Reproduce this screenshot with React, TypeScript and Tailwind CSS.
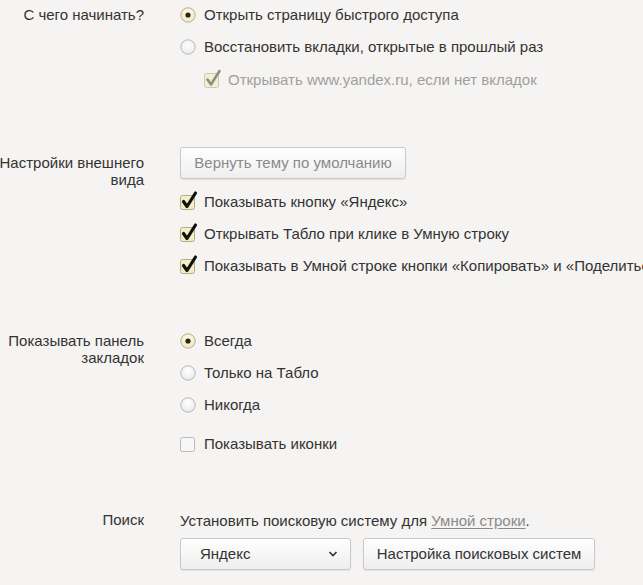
import { ReactNode } from 'react'

function Radio({ checked }: { checked?: boolean }) {
  return (
    <svg width="16" height="16" viewBox="0 0 16 16" className="shrink-0">
      <defs>
        <radialGradient id={checked ? 'rg-on' : 'rg-off'} cx="50%" cy="35%" r="65%">
          <stop offset="0%" stopColor={checked ? '#fffbe6' : '#ffffff'} />
          <stop offset="100%" stopColor={checked ? '#efe6c0' : '#e9e9e9'} />
        </radialGradient>
      </defs>
      <circle cx="8" cy="8" r="7.2" fill={`url(#${checked ? 'rg-on' : 'rg-off'})`} stroke={checked ? '#b9b08c' : '#b9b9b9'} strokeWidth="1" />
      {checked && <circle cx="8" cy="8" r="2.6" fill="#2b2412" />}
    </svg>
  )
}

function Checkbox({ checked, muted }: { checked?: boolean; muted?: boolean }) {
  return (
    <svg width="16" height="20" viewBox="0 0 16 20" className="-mt-1 shrink-0 overflow-visible">
      <rect
        x="0.5"
        y="5.5"
        width="14"
        height="14"
        rx="2"
        fill={checked ? (muted ? '#f4f0d8' : '#f6eec4') : '#f7f7f7'}
        stroke={checked ? (muted ? '#cdc8b0' : '#b3aa86') : '#b9b9b9'}
      />
      {checked && (
        <path
          d="M3.5 11.5 L7 16.5 L15.5 3"
          fill="none"
          stroke={muted ? '#8f8f7a' : '#111'}
          strokeWidth={muted ? 2.6 : 3.2}
          strokeLinecap="round"
          strokeLinejoin="round"
        />
      )}
    </svg>
  )
}

function Row({ children, className = '' }: { children: ReactNode; className?: string }) {
  return <div className={`flex h-8 items-center gap-2 whitespace-nowrap ${className}`}>{children}</div>
}

function Section({ label, children, className = '' }: { label: ReactNode; children: ReactNode; className?: string }) {
  return (
    <div className={`flex ${className}`}>
      <div className="-ml-[8px] w-[152px] shrink-0 pt-[7px] text-right leading-[17px]">{label}</div>
      <div className="ml-[36px] flex flex-col">{children}</div>
    </div>
  )
}

const btn =
  'h-8 rounded-[3px] border border-[#c9c9c9] bg-gradient-to-b from-white to-[#eeeeee] shadow-[0_1px_1px_rgba(0,0,0,0.08)]'

export default function App() {
  return (
    <div
      className="h-[585px] w-[643px] overflow-hidden bg-[#f5f4f2] text-[15px] text-[#333]"
      style={{ fontFamily: '"Liberation Sans", Arial, sans-serif' }}
    >
      <Section label="С чего начинать?" className="-mt-px">
        <Row>
          <Radio checked />
          <span>Открыть страницу быстрого доступа</span>
        </Row>
        <Row>
          <Radio />
          <span>Восстановить вкладки, открытые в прошлый раз</span>
        </Row>
        <Row className="ml-6 h-[34px] text-[#a0a0a0]">
          <Checkbox checked muted />
          <span>Открывать www.yandex.ru, если нет вкладок</span>
        </Row>
      </Section>

      <Section label="Настройки внешнего вида" className="mt-[50px]">
        <div className="h-[39px]">
          <button className={`${btn} w-[226px] text-[#8a8a8a]`}>Вернуть тему по умолчанию</button>
        </div>
        <Row>
          <Checkbox checked />
          <span>Показывать кнопку «Яндекс»</span>
        </Row>
        <Row>
          <Checkbox checked />
          <span>Открывать Табло при клике в Умную строку</span>
        </Row>
        <Row>
          <Checkbox checked />
          <span>Показывать в Умной строке кнопки «Копировать» и «Поделиться»</span>
        </Row>
      </Section>

      <Section label="Показывать панель закладок" className="mt-[43px]">
        <Row>
          <Radio checked />
          <span>Всегда</span>
        </Row>
        <Row>
          <Radio />
          <span>Только на Табло</span>
        </Row>
        <Row>
          <Radio />
          <span>Никогда</span>
        </Row>
        <Row className="mt-[7px]">
          <Checkbox />
          <span>Показывать иконки</span>
        </Row>
      </Section>

      <Section label="Поиск" className="mt-[44px]">
        <Row className="h-[34px]">
          <span>
            Установить поисковую систему для{' '}
            <span className="text-[#8a8a8a] underline underline-offset-2">Умной строки</span>.
          </span>
        </Row>
        <div className="flex gap-3">
          <button className={`${btn} flex w-[171px] items-center justify-between pl-[19px] pr-[12px]`}>
            <span>Яндекс</span>
            <svg width="10" height="6" viewBox="0 0 10 6">
              <path d="M1.5 1 L5 4.5 L8.5 1" fill="none" stroke="#333" strokeWidth="1.6" />
            </svg>
          </button>
          <button className={`${btn} w-[232px]`}>Настройка поисковых систем</button>
        </div>
      </Section>
    </div>
  )
}
